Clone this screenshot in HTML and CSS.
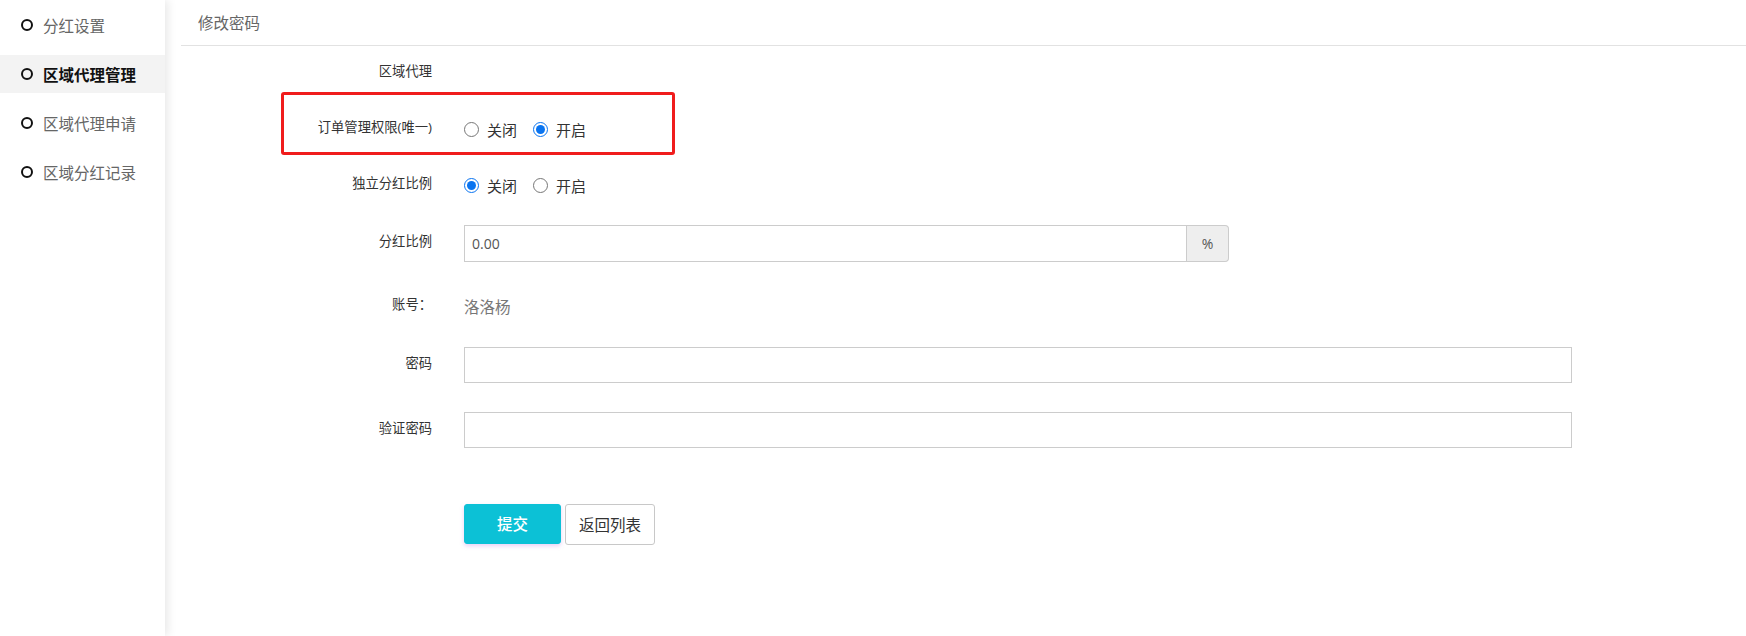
FILE: index.html
```html
<!DOCTYPE html>
<html lang="zh-CN">
<head>
<meta charset="utf-8">
<title>修改密码</title>
<link rel="stylesheet" href="styles.css">
</head>
<body>
<div class="layout">
  <aside class="sidebar">
    <div class="nav-item"><span class="nav-dot"></span><span>分红设置</span></div>
    <div class="nav-item active"><span class="nav-dot"></span><span>区域代理管理</span></div>
    <div class="nav-item"><span class="nav-dot"></span><span>区域代理申请</span></div>
    <div class="nav-item"><span class="nav-dot"></span><span>区域分红记录</span></div>
  </aside>
  <main class="main">
    <div class="page-head">修改密码</div>
    <form class="form">
      <div class="row row-a"><label class="lbl">区域代理</label></div>
      <div class="row row-b">
        <div class="mark"></div>
        <label class="lbl">订单管理权限(唯一)</label>
        <div class="radios">
          <label class="radio"><input type="radio" name="order"><span>关闭</span></label>
          <label class="radio"><input type="radio" name="order" checked><span>开启</span></label>
        </div>
      </div>
      <div class="row row-c">
        <label class="lbl">独立分红比例</label>
        <div class="radios">
          <label class="radio"><input type="radio" name="ratio" checked><span>关闭</span></label>
          <label class="radio"><input type="radio" name="ratio"><span>开启</span></label>
        </div>
      </div>
      <div class="row row-d">
        <label class="lbl">分红比例</label>
        <div class="group">
          <input class="ctl ctl-group" type="text" value="0.00">
          <span class="addon">%</span>
        </div>
      </div>
      <div class="row row-e">
        <label class="lbl">账号：</label>
        <div class="value">洛洛杨</div>
      </div>
      <div class="row row-f">
        <label class="lbl">密码</label>
        <input class="ctl" type="password">
      </div>
      <div class="row row-g">
        <label class="lbl">验证密码</label>
        <input class="ctl" type="password">
      </div>
      <div class="row row-h">
        <span class="lbl"></span>
        <div class="actions">
          <button type="button" class="btn btn-primary">提交</button>
          <button type="button" class="btn btn-default">返回列表</button>
        </div>
      </div>
    </form>
  </main>
</div>
</body>
</html>
```

FILE: styles.css
```css
* { box-sizing: border-box; }
html, body { margin: 0; padding: 0; background: #fff; }
body {
  font-family: "Open Sans", "Noto Sans CJK SC", sans-serif;
  color: #333;
  width: 1746px;
  height: 636px;
  overflow: hidden;
}
.layout { display: flex; height: 636px; }

.sidebar {
  width: 165px;
  flex: none;
  height: 636px;
  padding-top: 6px;
  background: #fff;
  box-shadow: 3px 0 9px rgba(0, 0, 0, 0.09);
  position: relative;
  z-index: 1;
}
.nav-item {
  height: 38px;
  margin-bottom: 11px;
  display: flex;
  align-items: center;
  padding-left: 21px;
  font-size: 15.5px;
  color: #666;
}
.nav-item.active { background: #f3f3f3; color: #111; font-weight: bold; }
.nav-dot {
  width: 12px;
  height: 12px;
  border: 2.4px solid #111;
  border-radius: 50%;
  margin-right: 10px;
  flex: none;
}

.main { flex: 1; margin-left: 16px; }
.page-head {
  height: 46px;
  border-bottom: 1px solid #e2e2e2;
  padding-left: 17px;
  display: flex;
  align-items: center;
  font-size: 15.5px;
  color: #666;
  padding-bottom: 1px;
}

.form { padding-top: 14px; }
.row { display: flex; align-items: center; position: relative; }
.lbl {
  width: 251px;
  flex: none;
  text-align: right;
  font-size: 13.3px;
  color: #333;
  margin-right: 32px;
  padding-bottom: 6px;
}
.row-a { height: 26px; }
.row-b { height: 36px; margin-top: 25px; }
.row-c { height: 36px; margin-top: 20px; }
.row-d { height: 37px; margin-top: 22px; }
.row-e { height: 36px; margin-top: 26px; }
.row-f { height: 36px; margin-top: 23px; }
.row-g { height: 36px; margin-top: 29px; }
.row-h { height: 40px; margin-top: 56px; }

.mark {
  position: absolute;
  left: 100px;
  top: -19px;
  width: 394px;
  height: 63px;
  border: 3px solid #f01c1c;
  border-radius: 3px;
  pointer-events: none;
}

.radios { display: flex; align-items: center; }
.radio {
  display: flex;
  align-items: center;
  font-size: 15px;
  color: #333;
  margin-right: 16px;
}
.radio input {
  width: 15px;
  height: 15px;
  margin: 0 8px 0 0;
  accent-color: #0a74f0;
}

.ctl {
  width: 1108px;
  height: 36px;
  border: 1px solid #cccccc;
  border-radius: 0;
  padding: 0 7px;
  font-family: "Open Sans", "Noto Sans CJK SC", sans-serif;
  font-size: 14px;
  color: #555;
  outline: none;
  background: #fff;
}
.group { display: flex; height: 37px; }
.ctl-group { width: 723px; height: 37px; }
.addon {
  width: 42px;
  height: 37px;
  border: 1px solid #cccccc;
  border-left: 0;
  border-radius: 0 4px 4px 0;
  background: #eeeeee;
  display: flex;
  align-items: center;
  justify-content: center;
  font-size: 14px;
  color: #555;
}
.value { font-size: 15.5px; color: #777; }

.actions { display: flex; gap: 4px; }
.btn {
  height: 40px;
  font-family: "Open Sans", "Noto Sans CJK SC", sans-serif;
  font-size: 15.5px;
  border-radius: 3px;
  cursor: pointer;
  padding: 0;
}
.btn-primary {
  width: 97px;
  background: #0cc1d6;
  border: 1px solid #0cc1d6;
  color: #fff;
  font-weight: 500;
  box-shadow: 0 2px 4px rgba(190, 120, 230, 0.35);
}
.btn-default {
  width: 90px;
  height: 41px;
  background: #fff;
  border: 1px solid #c8c8c8;
  color: #333;
}
```
